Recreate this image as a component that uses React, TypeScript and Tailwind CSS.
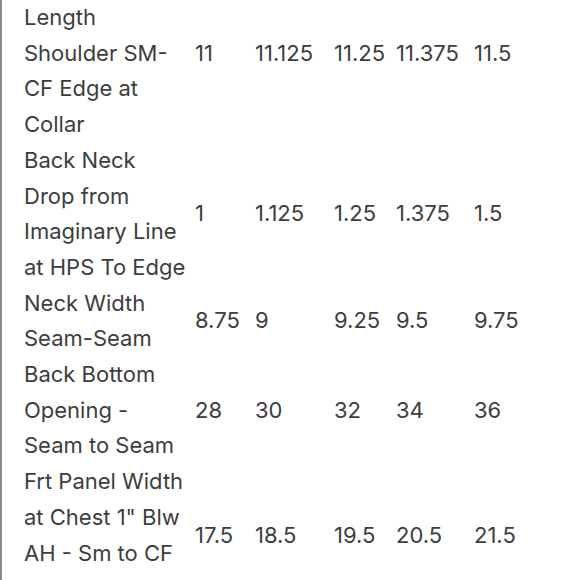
import React from 'react';

interface SpecRow {
    label: string[];
    values: string[];
}

const rows: SpecRow[] = [
    { label: ['Collar Band', 'Length', 'Shoulder SM-', 'CF Edge at', 'Collar'], values: ['11', '11.125', '11.25', '11.375', '11.5'] },
    { label: ['Back Neck', 'Drop from', 'Imaginary Line', 'at HPS To Edge'], values: ['1', '1.125', '1.25', '1.375', '1.5'] },
    { label: ['Neck Width', 'Seam-Seam'], values: ['8.75', '9', '9.25', '9.5', '9.75'] },
    { label: ['Back Bottom', 'Opening -', 'Seam to Seam'], values: ['28', '30', '32', '34', '36'] },
    { label: ['Frt Panel Width', 'at Chest 1" Blw', 'AH - Sm to CF', 'Edge'], values: ['17.5', '18.5', '19.5', '20.5', '21.5'] },
];

const colWidths = ['w-[171px]', 'w-[60px]', 'w-[79px]', 'w-[62px]', 'w-[78px]', 'w-[80px]'];

const App: React.FC = () => {
    return (
        <div className="w-[580px] h-[580px] overflow-hidden bg-white">
            <div className="flex flex-col items-start h-full border-l-2 border-[#8a8a8a] pl-[22px] font-['Inter',sans-serif] text-[22px] leading-[35.7px] text-[#3d3d3d]">
                <table className="table-fixed w-[530px] border-collapse -mt-[35.7px]">
                    <colgroup>
                        {colWidths.map((w, i) => (
                            <col key={i} className={w} />
                        ))}
                    </colgroup>
                    <tbody>
                        {rows.map((row, r) => (
                            <tr key={r}>
                                <td className="p-0 align-middle whitespace-nowrap">
                                    {row.label.map((line, i) => (
                                        <div key={i}>{line}</div>
                                    ))}
                                </td>
                                {row.values.map((v, i) => (
                                    <td key={i} className="p-0 align-middle whitespace-nowrap">
                                        {v}
                                    </td>
                                ))}
                            </tr>
                        ))}
                    </tbody>
                </table>
            </div>
        </div>
    );
};

export default App;
